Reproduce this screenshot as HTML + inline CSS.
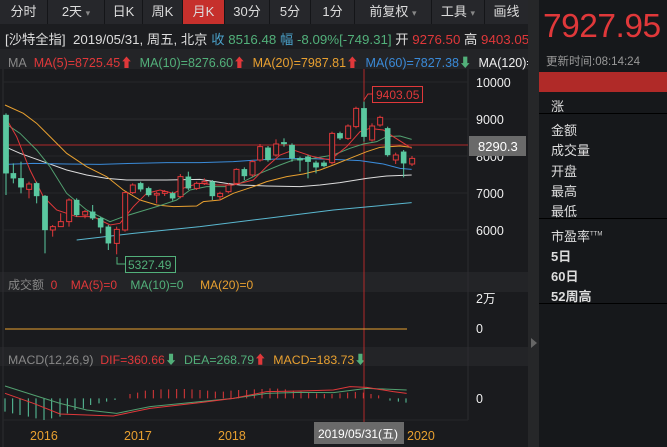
<!DOCTYPE html>
<html><head><meta charset="utf-8"><style>
*{margin:0;padding:0;box-sizing:border-box}
body{width:667px;height:447px;background:#1a1b1e;font-family:"Liberation Sans","Noto Sans CJK SC",sans-serif;overflow:hidden;position:relative;color:#ddd}
.a{position:absolute;white-space:nowrap}
.tb{position:absolute;left:0;top:0;width:528px;height:24px;background:#26272b;display:flex}
.tb div{height:24px;line-height:24px;font-size:13px;color:#ddd;text-align:center;border-right:1px solid #141518}
.rp{position:absolute;left:539px;top:0;width:128px;height:447px;background:#16181b;overflow:hidden}
.rp .l{position:absolute;left:12px;font-size:13px;color:#ddd}
</style></head><body>
<div class="tb">
<div style="width:48px">分时</div><div style="width:57px">2天 <span style="color:#888;font-size:9px">▾</span></div><div style="width:38px">日K</div><div style="width:40px">周K</div><div style="width:42px;background:#c6302c">月K</div><div style="width:45px">30分</div><div style="width:41px">5分</div><div style="width:44px">1分</div><div style="width:77px">前复权 <span style="color:#888;font-size:9px">▾</span></div><div style="width:53px">工具 <span style="color:#888;font-size:9px">▾</span></div><div style="width:43px;border:none">画线</div>
</div>
<div class="a" style="left:0;top:24px;width:528px;height:25px;background:#1c1d20"></div>
<div class="a" style="left:5px;top:29px;font-size:13.3px;color:#ddd">[沙特全指]&nbsp; 2019/05/31, 周五, 北京 <span style="color:#4aa0c8">收</span> <span style="color:#52b07a">8516.48</span> <span style="color:#4aa0c8">幅</span> <span style="color:#52b07a">-8.09%[-749.31]</span> 开 <span style="color:#e0383a">9276.50</span> 高 <span style="color:#e0383a">9403.05</span></div>
<div class="a" style="left:0;top:49px;width:528px;height:20px;background:#232427"></div>
<div class="a" style="left:8px;top:52px;font-size:12.5px;color:#888">MA&nbsp; <span style="color:#e0383a">MA(5)=8725.45⬆</span>&nbsp; <span style="color:#52b07a">MA(10)=8276.60<span style="color:#e0383a">⬆</span></span>&nbsp; <span style="color:#e8a030">MA(20)=7987.81<span style="color:#e0383a">⬆</span></span>&nbsp; <span style="color:#3a8ad8">MA(60)=7827.38<span style="color:#52b07a">⬇</span></span>&nbsp; <span style="color:#eee">MA(120)=</span></div>
<div class="a" style="left:0;top:272px;width:528px;height:20px;background:#232427"></div>
<div class="a" style="left:8px;top:276px;font-size:12px;color:#888">成交额&nbsp; <span style="color:#e0383a">0</span>&nbsp;&nbsp;&nbsp; <span style="color:#e0383a">MA(5)=0</span>&nbsp;&nbsp;&nbsp; <span style="color:#52b07a">MA(10)=0</span>&nbsp;&nbsp;&nbsp;&nbsp; <span style="color:#e8a030">MA(20)=0</span></div>
<div class="a" style="left:0;top:347px;width:528px;height:19px;background:#232427"></div>
<div class="a" style="left:8px;top:350px;font-size:12.3px;color:#888">MACD(12,26,9)&nbsp; <span style="color:#e0383a">DIF=360.66<span style="color:#52b07a">⬇</span></span>&nbsp; <span style="color:#52b07a">DEA=268.79<span style="color:#e0383a">⬆</span></span>&nbsp; <span style="color:#e8a030">MACD=183.73<span style="color:#52b07a">⬇</span></span></div>
<div class="a" style="left:528px;top:0;width:11px;height:447px;background:#262729"></div>
<div class="a" style="left:531px;top:338px;width:0;height:0;border-left:6px solid #666;border-top:5px solid transparent;border-bottom:5px solid transparent"></div>
<svg class="a" style="left:0;top:0" width="528" height="447">
<line x1="468" y1="69" x2="468" y2="420" stroke="#2c2d30"/>
<line x1="3" y1="69" x2="3" y2="447" stroke="#2c2d30"/>
<g stroke="#26272a"><line x1="3" y1="82" x2="468" y2="82"/><line x1="3" y1="119" x2="468" y2="119"/><line x1="3" y1="156" x2="468" y2="156"/><line x1="3" y1="193" x2="468" y2="193"/><line x1="3" y1="230" x2="468" y2="230"/><line x1="3" y1="420" x2="468" y2="420"/></g>
<line x1="364" y1="69" x2="364" y2="422" stroke="#b02a2a"/>
<line x1="3" y1="145" x2="468" y2="145" stroke="#b02a2a"/>
<g transform="translate(0,70) scale(0.33333)" fill="none" stroke-width="1" vector-effect="non-scaling-stroke">
<polyline vector-effect="non-scaling-stroke" stroke="#5ab8d0" points="230,510 400,490 600,470 800,445 1000,420 1235,398"/>
<polyline vector-effect="non-scaling-stroke" stroke="#ddd" points="15,230 60,250 130,275 200,300 260,315 320,325 380,330 500,330 600,328 680,340 720,345 800,348 900,350 960,345 1020,338 1100,325 1160,318 1235,315"/>
<polyline vector-effect="non-scaling-stroke" stroke="#3a8ad8" points="15,283 100,280 200,282 300,283 400,280 500,278 600,278 700,275 800,268 900,265 1000,268 1080,272 1150,282 1200,295 1235,298"/>
<polyline vector-effect="non-scaling-stroke" stroke="#e8a030" points="15,105 70,130 110,160 150,200 200,250 260,290 320,320 370,360 420,390 470,405 520,410 590,408 610,395 660,390 700,370 760,350 800,335 860,320 910,312 960,300 1000,285 1050,265 1100,245 1140,232 1200,228 1235,232"/>
<polyline vector-effect="non-scaling-stroke" stroke="#52a070" points="15,160 60,190 110,240 150,290 200,370 260,420 330,455 370,440 420,425 470,410 530,390 570,360 620,350 680,350 720,340 780,310 840,285 880,270 940,265 1000,255 1050,235 1090,222 1130,215 1160,200 1200,198 1235,208"/>
<polyline vector-effect="non-scaling-stroke" stroke="#e0383a" points="15,140 50,200 90,300 130,380 170,420 230,440 280,440 330,465 360,460 400,410 440,370 480,360 520,370 560,350 600,340 650,345 700,345 760,330 800,290 840,255 880,240 940,260 990,270 1040,230 1080,185 1110,175 1150,180 1180,200 1235,235"/>
<g stroke="#5ac8a0" fill="#5ac8a0">
<line vector-effect="non-scaling-stroke" x1="18" y1="130" x2="18" y2="375"/><rect x="10" y="135" width="16" height="175"/>
<line vector-effect="non-scaling-stroke" x1="40" y1="280" x2="40" y2="340"/><rect x="32" y="310" width="16" height="15"/>
<line vector-effect="non-scaling-stroke" x1="63" y1="275" x2="63" y2="370"/><rect x="55" y="325" width="16" height="27"/>
<line vector-effect="non-scaling-stroke" x1="110" y1="335" x2="110" y2="400"/><rect x="102" y="340" width="16" height="38"/>
<line vector-effect="non-scaling-stroke" x1="135" y1="375" x2="135" y2="550"/><rect x="127" y="378" width="16" height="102"/>
<line vector-effect="non-scaling-stroke" x1="230" y1="385" x2="230" y2="440"/><rect x="222" y="390" width="16" height="45"/>
<line vector-effect="non-scaling-stroke" x1="278" y1="405" x2="278" y2="450"/><rect x="270" y="425" width="16" height="20"/>
<line vector-effect="non-scaling-stroke" x1="302" y1="440" x2="302" y2="490"/><rect x="294" y="445" width="16" height="27"/>
<line vector-effect="non-scaling-stroke" x1="325" y1="465" x2="325" y2="540"/><rect x="317" y="470" width="16" height="50"/>
<line vector-effect="non-scaling-stroke" x1="422" y1="335" x2="422" y2="365"/><rect x="414" y="340" width="16" height="18"/>
<line vector-effect="non-scaling-stroke" x1="446" y1="350" x2="446" y2="380"/><rect x="438" y="355" width="16" height="20"/>
<line vector-effect="non-scaling-stroke" x1="518" y1="365" x2="518" y2="392"/><rect x="510" y="370" width="16" height="15"/>
<line vector-effect="non-scaling-stroke" x1="565" y1="305" x2="565" y2="360"/><rect x="557" y="320" width="16" height="35"/>
<line vector-effect="non-scaling-stroke" x1="637" y1="330" x2="637" y2="390"/><rect x="629" y="335" width="16" height="43"/>
<line vector-effect="non-scaling-stroke" x1="733" y1="292" x2="733" y2="330"/><rect x="725" y="298" width="16" height="20"/>
<line vector-effect="non-scaling-stroke" x1="804" y1="228" x2="804" y2="275"/><rect x="796" y="233" width="16" height="37"/>
<line vector-effect="non-scaling-stroke" x1="852" y1="205" x2="852" y2="230"/><rect x="844" y="217" width="16" height="5"/>
<line vector-effect="non-scaling-stroke" x1="876" y1="220" x2="876" y2="275"/><rect x="868" y="225" width="16" height="40"/>
<line vector-effect="non-scaling-stroke" x1="900" y1="260" x2="900" y2="305"/><rect x="892" y="265" width="16" height="6"/>
<line vector-effect="non-scaling-stroke" x1="924" y1="255" x2="924" y2="325"/><rect x="916" y="260" width="16" height="15"/>
<line vector-effect="non-scaling-stroke" x1="948" y1="272" x2="948" y2="310"/><rect x="940" y="278" width="16" height="14"/>
<line vector-effect="non-scaling-stroke" x1="972" y1="272" x2="972" y2="292"/><rect x="964" y="278" width="16" height="10"/>
<line vector-effect="non-scaling-stroke" x1="1020" y1="185" x2="1020" y2="210"/><rect x="1012" y="190" width="16" height="15"/>
<line vector-effect="non-scaling-stroke" x1="1092" y1="95" x2="1092" y2="215"/><rect x="1084" y="115" width="16" height="85"/>
<line vector-effect="non-scaling-stroke" x1="1163" y1="170" x2="1163" y2="260"/><rect x="1155" y="175" width="16" height="80"/>
<line vector-effect="non-scaling-stroke" x1="1211" y1="240" x2="1211" y2="322"/><rect x="1203" y="245" width="16" height="35"/>
</g>
<g stroke="#e0383a" fill="#1a1b1e">
<line vector-effect="non-scaling-stroke" x1="87" y1="335" x2="87" y2="385"/><rect vector-effect="non-scaling-stroke" x="80" y="342" width="15" height="16"/>
<line vector-effect="non-scaling-stroke" x1="158" y1="465" x2="158" y2="500"/><rect vector-effect="non-scaling-stroke" x="151" y="470" width="15" height="10"/>
<line vector-effect="non-scaling-stroke" x1="182" y1="430" x2="182" y2="470"/><rect vector-effect="non-scaling-stroke" x="175" y="455" width="15" height="15"/>
<line vector-effect="non-scaling-stroke" x1="207" y1="385" x2="207" y2="470"/><rect vector-effect="non-scaling-stroke" x="200" y="390" width="15" height="65"/>
<line vector-effect="non-scaling-stroke" x1="255" y1="420" x2="255" y2="445"/><rect vector-effect="non-scaling-stroke" x="248" y="425" width="15" height="10"/>
<line vector-effect="non-scaling-stroke" x1="350" y1="470" x2="350" y2="553"/><rect vector-effect="non-scaling-stroke" x="343" y="478" width="15" height="42"/>
<line vector-effect="non-scaling-stroke" x1="375" y1="365" x2="375" y2="485"/><rect vector-effect="non-scaling-stroke" x="368" y="368" width="15" height="112"/>
<line vector-effect="non-scaling-stroke" x1="398" y1="340" x2="398" y2="372"/><rect vector-effect="non-scaling-stroke" x="391" y="345" width="15" height="23"/>
<line vector-effect="non-scaling-stroke" x1="470" y1="365" x2="470" y2="400"/><rect vector-effect="non-scaling-stroke" x="463" y="370" width="15" height="5"/>
<line vector-effect="non-scaling-stroke" x1="494" y1="360" x2="494" y2="378"/><rect vector-effect="non-scaling-stroke" x="487" y="365" width="15" height="5"/>
<line vector-effect="non-scaling-stroke" x1="541" y1="312" x2="541" y2="385"/><rect vector-effect="non-scaling-stroke" x="534" y="320" width="15" height="60"/>
<line vector-effect="non-scaling-stroke" x1="590" y1="335" x2="590" y2="360"/><rect vector-effect="non-scaling-stroke" x="583" y="340" width="15" height="15"/>
<line vector-effect="non-scaling-stroke" x1="613" y1="325" x2="613" y2="345"/><rect vector-effect="non-scaling-stroke" x="606" y="335" width="15" height="5"/>
<line vector-effect="non-scaling-stroke" x1="660" y1="365" x2="660" y2="392"/><rect vector-effect="non-scaling-stroke" x="653" y="370" width="15" height="10"/>
<line vector-effect="non-scaling-stroke" x1="685" y1="340" x2="685" y2="370"/><rect vector-effect="non-scaling-stroke" x="678" y="345" width="15" height="20"/>
<line vector-effect="non-scaling-stroke" x1="709" y1="295" x2="709" y2="345"/><rect vector-effect="non-scaling-stroke" x="702" y="298" width="15" height="42"/>
<line vector-effect="non-scaling-stroke" x1="757" y1="270" x2="757" y2="320"/><rect vector-effect="non-scaling-stroke" x="750" y="275" width="15" height="40"/>
<line vector-effect="non-scaling-stroke" x1="780" y1="222" x2="780" y2="275"/><rect vector-effect="non-scaling-stroke" x="773" y="230" width="15" height="40"/>
<line vector-effect="non-scaling-stroke" x1="828" y1="208" x2="828" y2="260"/><rect vector-effect="non-scaling-stroke" x="821" y="222" width="15" height="33"/>
<line vector-effect="non-scaling-stroke" x1="996" y1="185" x2="996" y2="283"/><rect vector-effect="non-scaling-stroke" x="989" y="190" width="15" height="88"/>
<line vector-effect="non-scaling-stroke" x1="1044" y1="163" x2="1044" y2="210"/><rect vector-effect="non-scaling-stroke" x="1037" y="168" width="15" height="37"/>
<line vector-effect="non-scaling-stroke" x1="1068" y1="110" x2="1068" y2="175"/><rect vector-effect="non-scaling-stroke" x="1061" y="115" width="15" height="55"/>
<line vector-effect="non-scaling-stroke" x1="1116" y1="160" x2="1116" y2="215"/><rect vector-effect="non-scaling-stroke" x="1109" y="168" width="15" height="42"/>
<line vector-effect="non-scaling-stroke" x1="1140" y1="137" x2="1140" y2="170"/><rect vector-effect="non-scaling-stroke" x="1133" y="142" width="15" height="23"/>
<line vector-effect="non-scaling-stroke" x1="1187" y1="248" x2="1187" y2="282"/><rect vector-effect="non-scaling-stroke" x="1180" y="255" width="15" height="15"/>
<line vector-effect="non-scaling-stroke" x1="1236" y1="258" x2="1236" y2="288"/><rect vector-effect="non-scaling-stroke" x="1229" y="265" width="15" height="17"/>
</g>
</g>
<polyline points="364,100 368,94 373,94" fill="none" stroke="#e0383a"/>
<rect x="372.5" y="86.5" width="50" height="16" fill="none" stroke="#e0383a"/>
<text x="376" y="99" font-size="12" fill="#e0383a" font-family="Liberation Sans">9403.05</text>
<polyline points="117,257 117,264 125,264" fill="none" stroke="#52b07a"/>
<rect x="125.5" y="256.5" width="50" height="16" fill="none" stroke="#52b07a"/>
<text x="128" y="269" font-size="12" fill="#52b07a" font-family="Liberation Sans">5327.49</text>
<line x1="5" y1="329" x2="407" y2="329" stroke="#e8a030"/>
<g transform="translate(0,270) scale(0.33333)">
<g stroke="#5ac8a0" stroke-width="1" vector-effect="non-scaling-stroke">
<path vector-effect="non-scaling-stroke" d="M15 385V425M38 385V430M60 385V435M85 385V440M108 385V445M132 385V450M155 385V445M180 385V440M202 385V430M225 385V420M250 385V415M272 385V405M297 385V400M320 385V395M345 385V390M1170 385V392M1195 385V395M1218 385V398"/>
</g>
<g stroke="#e0383a" vector-effect="non-scaling-stroke">
<path vector-effect="non-scaling-stroke" d="M390 385V372M413 385V368M436 385V362M460 385V360M483 385V358M506 385V358M530 385V357M553 385V357M576 385V358M600 385V360M623 385V362M646 385V365M670 385V365M693 385V362M716 385V360M740 385V360M763 385V358M786 385V357M810 385V355M833 385V356M856 385V358M880 385V362M903 385V365M926 385V368M950 385V370M973 385V372M996 385V372M1020 385V370M1043 385V368M1066 385V366M1090 385V368M1113 385V372M1136 385V376"/>
</g>
<polyline vector-effect="non-scaling-stroke" fill="none" stroke="#52a070" stroke-width="1" points="15,348 100,375 180,400 260,420 350,430 450,410 600,395 700,385 800,370 900,367 1000,368 1100,355 1220,360"/>
<polyline vector-effect="non-scaling-stroke" fill="none" stroke="#e0383a" stroke-width="1" points="15,370 100,400 180,432 260,435 340,438 450,415 600,398 700,385 800,365 900,363 1000,360 1050,350 1100,352 1180,365 1220,370"/>
</g>
<g font-size="12.5" fill="#eee" font-family="Liberation Sans"><text x="476" y="87">10000</text><text x="476" y="124">9000</text><text x="476" y="161">8000</text><text x="476" y="198">7000</text><text x="476" y="235">6000</text><text x="476" y="303">2万</text><text x="476" y="333">0</text><text x="476" y="403">0</text></g>
<rect x="469" y="136" width="57" height="20" fill="#6a6a6a"/>
<text x="478" y="151" font-size="13" fill="#fff" font-family="Liberation Sans">8290.3</text>
<g font-size="12.5" fill="#e8a030" font-family="Liberation Sans"><text x="30" y="440">2016</text><text x="124" y="440">2017</text><text x="218" y="440">2018</text><text x="407" y="440">2020</text></g>
<rect x="314" y="422" width="90" height="22" fill="#6a6a6a"/>
<text x="318" y="438" font-size="12" fill="#fff" font-family="Liberation Sans,Noto Sans CJK SC">2019/05/31(五)</text>
</svg>
<div class="rp">
<div class="a" style="left:4px;top:8px;font-size:33.5px;color:#e0383a;letter-spacing:-0.5px">7927.95</div>
<div class="a" style="left:7px;top:53px;font-size:11.5px;color:#999">更新时间:08:14:24</div>
<div class="a" style="left:0;top:72px;width:128px;height:20px;background:#b02a28"></div>
<div class="l" style="top:96px">涨</div>
<div class="a" style="left:0;top:113px;width:128px;height:1px;background:#000"></div>
<div class="l" style="top:120px">金额</div><div class="l" style="top:140px">成交量</div><div class="l" style="top:161px">开盘</div><div class="l" style="top:181px">最高</div><div class="l" style="top:201px">最低</div>
<div class="a" style="left:0;top:218px;width:128px;height:1px;background:#000"></div>
<div class="l" style="top:226px">市盈率<sup style="font-size:6px">TTM</sup></div><div class="l" style="top:246px;font-weight:bold">5日</div><div class="l" style="top:266px;font-weight:bold">60日</div><div class="l" style="top:286px;font-weight:bold">52周高</div>
<div class="a" style="left:0;top:303px;width:128px;height:1px;background:#000"></div>
</div>
</body></html>
